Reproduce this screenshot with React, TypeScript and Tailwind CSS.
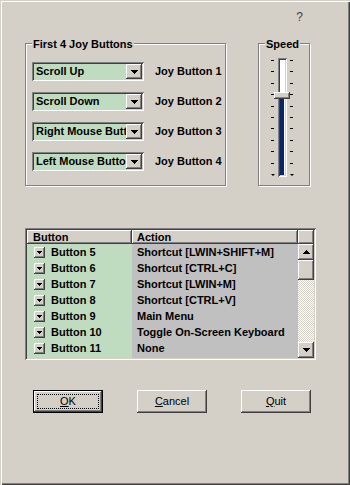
const raised =
  "shadow-[inset_-1px_-1px_#404040,inset_1px_1px_#ffffff,inset_-2px_-2px_#808080,inset_2px_2px_#d4d0c8]";
const sunken =
  "shadow-[inset_1px_1px_#808080,inset_-1px_-1px_#ffffff,inset_2px_2px_#404040,inset_-2px_-2px_#d4d0c8]";

function DownArrow({ small }: { small?: boolean }) {
  return small ? (
    <svg width="5" height="3" viewBox="0 0 5 3" shapeRendering="crispEdges">
      <path d="M0 0h5v1h-1v1h-1v1h-1v-1h-1v-1h-1z" fill="#000" />
    </svg>
  ) : (
    <svg width="7" height="4" viewBox="0 0 7 4" shapeRendering="crispEdges">
      <path d="M0 0h7v1h-1v1h-1v1h-1v1h-1v-1h-1v-1h-1v-1h-1z" fill="#000" />
    </svg>
  );
}

function UpArrow() {
  return (
    <svg width="7" height="4" viewBox="0 0 7 4" shapeRendering="crispEdges">
      <path d="M3 0h1v1h1v1h1v1h1v1h-7v-1h1v-1h1v-1h1z" fill="#000" />
    </svg>
  );
}

function GroupBox({ title, className, children }: { title: string; className: string; children: React.ReactNode }) {
  return (
    <div className={"relative border border-[#808080] shadow-[inset_1px_1px_#ffffff,1px_1px_#ffffff] " + className}>
      <span className="absolute -top-[6px] left-[6px] px-[1px] bg-[#d4d0c8] font-bold">{title}</span>
      {children}
    </div>
  );
}

const joys = ["Scroll Up", "Scroll Down", "Right Mouse Button", "Left Mouse Button"];

const rows = [
  ["Button 5", "Shortcut [LWIN+SHIFT+M]"],
  ["Button 6", "Shortcut [CTRL+C]"],
  ["Button 7", "Shortcut [LWIN+M]"],
  ["Button 8", "Shortcut [CTRL+V]"],
  ["Button 9", "Main Menu"],
  ["Button 10", "Toggle On-Screen Keyboard"],
  ["Button 11", "None"],
];

export default function App() {
  return (
    <div className="w-[350px] h-[485px] bg-[#d4d0c8] pl-[25px] text-black text-[11px] leading-[13px] font-['Liberation_Sans',Arial,sans-serif] shadow-[inset_1px_1px_#d4d0c8,inset_2px_2px_#ffffff,inset_-1px_-1px_#404040,inset_-2px_-2px_#808080]">
      {/* help mark */}
      <div className="h-[43px] flex justify-end pr-[47px] pt-[11px]">
        <span className="text-[#404040] text-[12px]">?</span>
      </div>

      <div className="flex gap-[32px]">
        <GroupBox title="First 4 Joy Buttons" className="w-[201px] h-[143px]">
          <div className="pt-[18px] pl-[6px] flex flex-col gap-[11px]">
            {joys.map((j, i) => (
              <div key={j} className="flex items-center">
                <div className={"w-[112px] h-[19px] bg-[#c0dcc0] p-[2px] flex " + sunken}>
                  <span className="flex-1 overflow-hidden whitespace-nowrap pl-[2px] font-bold leading-[15px]">{j}</span>
                  <div className={"w-[16px] h-[15px] bg-[#d4d0c8] flex items-center justify-center shrink-0 " + raised}>
                    <DownArrow />
                  </div>
                </div>
                <span className="ml-[11px] font-bold">Joy Button {i + 1}</span>
              </div>
            ))}
          </div>
        </GroupBox>

        <GroupBox title="Speed" className="w-[52px] h-[143px]">
          <div className="pt-[14px] pl-[12px] flex">
            <div className="w-[3px] h-[119px] pt-[2px] flex flex-col justify-between items-center">
              {Array.from({ length: 10 }).map((_, i) => (
                <div key={i} className="w-[3px] h-[1px] bg-black" />
              ))}
              <div className="w-0 h-0 border-x-[2px] border-t-[2px] border-x-transparent border-t-black mb-[1px]" />
            </div>
            <div className={"relative ml-[4px] w-[9px] h-[119px] bg-white p-[2px] flex flex-col justify-end " + sunken}>
              <div className="w-[4px] h-[76px] ml-[0px] bg-[#0a246a]" />
              <div className={"absolute -left-[4px] top-[34px] w-[16px] h-[7px] bg-[#d4d0c8] " + raised} />
            </div>
            <div className="ml-[3px] w-[3px] h-[119px] pt-[2px] flex flex-col justify-between items-center">
              {Array.from({ length: 10 }).map((_, i) => (
                <div key={i} className="w-[3px] h-[1px] bg-black" />
              ))}
              <div className="w-0 h-0 border-x-[2px] border-t-[2px] border-x-transparent border-t-black mb-[1px]" />
            </div>
          </div>
        </GroupBox>
      </div>

      {/* list view */}
      <div className={"mt-[42px] w-[291px] h-[132px] p-[2px] bg-[#d4d0c8] flex flex-col " + sunken}>
        <div className="flex h-[14px] font-bold">
          <div className={"w-[105px] pl-[6px] leading-[14px] " + raised}>Button</div>
          <div className={"w-[166px] pl-[5px] leading-[14px] " + raised}>Action</div>
          <div className={"flex-1 " + raised} />
        </div>
        <div className="flex flex-1">
          <div className="flex-1 flex flex-col bg-[linear-gradient(to_right,#c0dcc0_105px,#c0c0c0_105px)] font-bold">
            {rows.map(([b, a]) => (
              <div key={b} className="flex h-[16px] items-center">
                <div className="w-[105px] flex items-center pl-[7px]">
                  <div className={"w-[11px] h-[11px] bg-[#d4d0c8] flex items-center justify-center " + raised}>
                    <DownArrow small />
                  </div>
                  <span className="ml-[6px]">{b}</span>
                </div>
                <span className="pl-[5px] whitespace-nowrap">{a}</span>
              </div>
            ))}
          </div>
          <div className="w-[16px] flex flex-col">
            <div className={"h-[16px] bg-[#d4d0c8] flex items-center justify-center " + raised}>
              <UpArrow />
            </div>
            <div className={"h-[20px] bg-[#d4d0c8] " + raised} />
            <div className="flex-1 bg-[conic-gradient(#ffffff_25%,#d4d0c8_0_50%,#ffffff_0_75%,#d4d0c8_0)] bg-[length:2px_2px]" />
            <div className={"h-[16px] bg-[#d4d0c8] flex items-center justify-center " + raised}>
              <DownArrow />
            </div>
          </div>
        </div>
      </div>

      {/* buttons */}
      <div className="mt-[30px] ml-[8px] flex gap-[34px]">
        <div className="w-[70px] h-[23px] border border-black">
          <div className={"w-full h-full p-[3px] " + raised}>
            <div className="w-full h-full border border-dotted border-black flex items-center justify-center">
              <span><u>O</u>K</span>
            </div>
          </div>
        </div>
        <div className={"w-[70px] h-[23px] flex items-center justify-center " + raised}>
          <span><u>C</u>ancel</span>
        </div>
        <div className={"w-[70px] h-[23px] flex items-center justify-center " + raised}>
          <span><u>Q</u>uit</span>
        </div>
      </div>
    </div>
  );
}
